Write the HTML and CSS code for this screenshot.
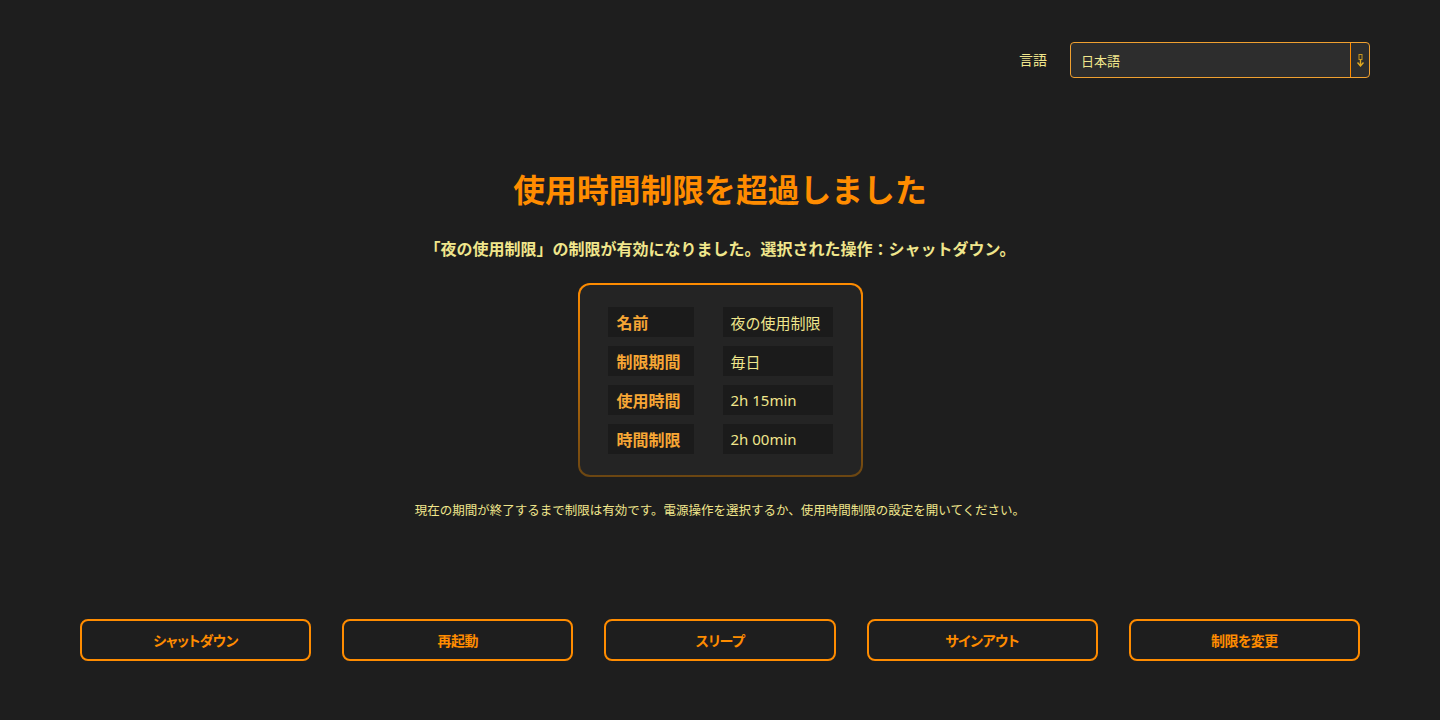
FILE: index.html
```html
<!DOCTYPE html>
<html lang="ja">
<head>
    <meta charset="UTF-8">
    <title>使用時間制限</title>
    <meta name="viewport" content="width=device-width, initial-scale=1.0">
    <link rel="stylesheet" href="styles.css">
</head>
<body>
<div class="top-bar">
    <span class="lang-label">言語</span>
    <div class="lang-select">
        <span class="lang-value">日本語</span>
        <span class="lang-arrow">
            <svg width="7" height="13" viewBox="0 0 7 13">
                <rect x="2" y="0.5" width="3" height="5" fill="none" stroke="#c8961e" stroke-width="1"/>
                <path d="M3.5 5.5 V11.5 M0.5 8.5 L3.5 12 L6.5 8.5" fill="none" stroke="#e0a820" stroke-width="1.4"/>
            </svg>
        </span>
    </div>
</div>

<div class="main">
    <h1 class="title">使用時間制限を超過しました</h1>
    <p class="subtitle">「夜の使用制限」の制限が有効になりました。選択された操作：シャットダウン。</p>

    <div class="info-card">
        <div class="cell label">名前</div>
        <div class="cell value">夜の使用制限</div>
        <div class="cell label">制限期間</div>
        <div class="cell value">毎日</div>
        <div class="cell label">使用時間</div>
        <div class="cell value">2h 15min</div>
        <div class="cell label">時間制限</div>
        <div class="cell value">2h 00min</div>
    </div>

    <p class="note">現在の期間が終了するまで制限は有効です。電源操作を選択するか、使用時間制限の設定を開いてください。</p>
</div>

<div class="actions">
    <button type="button" class="action-btn">シャットダウン</button>
    <button type="button" class="action-btn">再起動</button>
    <button type="button" class="action-btn">スリープ</button>
    <button type="button" class="action-btn">サインアウト</button>
    <button type="button" class="action-btn">制限を変更</button>
</div>
</body>
</html>
```

FILE: styles.css
```css
html, body {
    margin: 0;
    padding: 0;
    background-color: #1e1e1e;
    height: 100%;
}
body {
    font-family: "Noto Sans", "Noto Sans CJK JP", sans-serif;
    color: #f0e68c;
}
/* language picker */
.top-bar {
    display: flex;
    justify-content: flex-end;
    align-items: center;
    padding: 42px 70px 0 0;
    gap: 23px;
}
.lang-label {
    font-size: 14px;
    line-height: 20px;
}
.lang-select {
    width: 298px;
    height: 34px;
    display: flex;
    align-items: stretch;
    background-color: #2d2d2d;
    border: 1px solid #f0a030;
    border-radius: 4px;
}
.lang-value {
    flex: 1;
    display: flex;
    align-items: center;
    padding-left: 10px;
    font-size: 13px;
}
.lang-arrow {
    width: 18px;
    border-left: 1px solid #ff8c00;
    display: flex;
    align-items: center;
    justify-content: center;
}
/* main message */
.main {
    display: flex;
    flex-direction: column;
    align-items: center;
}
.title {
    margin: 92px 0 0;
    font-size: 31.8px;
    line-height: 40px;
    font-weight: 700;
    color: #ff8c00;
}
.subtitle {
    margin: 27px 0 0;
    font-size: 16px;
    line-height: 24px;
    font-weight: 700;
    color: #f0e68c;
}
.info-card {
    margin-top: 22px;
    display: grid;
    grid-template-columns: 86px 110px;
    column-gap: 29px;
    row-gap: 9px;
    padding: 22px 28px 21px;
    border: 2px solid transparent;
    border-radius: 12px;
    background:
        linear-gradient(#242424, #242424) padding-box,
        linear-gradient(to bottom, #ff8c00, #6b4612) border-box;
}
.cell {
    box-sizing: border-box;
    height: 30px;
    display: flex;
    align-items: center;
    background-color: #1b1b1b;
}
.label {
    padding-left: 9px;
    font-size: 16px;
    font-weight: 700;
    color: #f6a635;
}
.value {
    padding-left: 8px;
    font-size: 15px;
    color: #f0e68c;
}
.note {
    margin: 25px 0 0;
    font-size: 12.5px;
    line-height: 18px;
    color: #f0e68c;
}
/* power actions */
.actions {
    display: flex;
    gap: 31px;
    padding: 0 80px;
    margin-top: 99px;
}
.action-btn {
    flex: 1;
    height: 42px;
    background-color: #1e1e1e;
    border: 2px solid #ff8c00;
    border-radius: 8px;
    color: #ff8c00;
    font-family: "Noto Sans", "Noto Sans CJK JP", sans-serif;
    font-size: 14px;
    font-weight: 700;
    font-feature-settings: "palt";
    letter-spacing: -0.5px;
    cursor: pointer;
}
```
